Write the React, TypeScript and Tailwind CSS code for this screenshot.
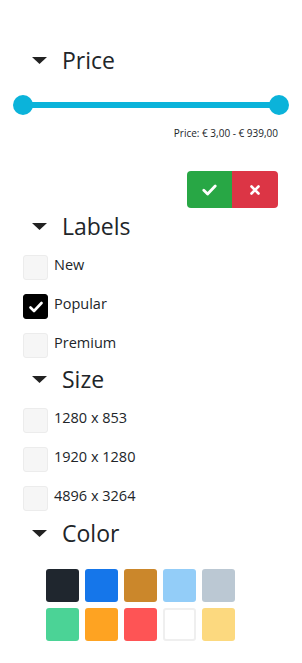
import { useState } from "react";

const Caret = () => (
  <svg width="15" height="7" viewBox="0 0 15 7" className="shrink-0">
    <path d="M0 0 H15 L7.5 7 Z" fill="#222" />
  </svg>
);

const Heading = ({ title, className = "" }: { title: string; className?: string }) => (
  <div className={`flex h-[32px] items-center pl-[32px] ${className}`}>
    <Caret />
    <span className="ml-[15px] text-[23px] leading-[32px] text-[#212529]">{title}</span>
  </div>
);

const Check = ({ label, checked, onToggle }: { label: string; checked: boolean; onToggle: () => void }) => (
  <label className="flex cursor-pointer items-start gap-[6px]" onClick={onToggle}>
    <span
      className={`flex h-[25px] w-[25px] items-center justify-center rounded-[3px] border ${
        checked ? "border-black bg-black" : "border-[#ececec] bg-[#f6f6f6]"
      }`}
    >
      {checked && (
        <svg width="14" height="12" viewBox="0 0 14 12">
          <path d="M1.5 6.5 L5 10 L12.5 2" fill="none" stroke="#fff" strokeWidth="2.6" strokeLinecap="round" strokeLinejoin="round" />
        </svg>
      )}
    </span>
    <span className="-mt-[1px] text-[14.5px] leading-[22px] text-[#212529]">{label}</span>
  </label>
);

const swatches = [
  "bg-[#1f262e]",
  "bg-[#1576ea]",
  "bg-[#cb872b]",
  "bg-[#93cdf8]",
  "bg-[#bbc8d3]",
  "bg-[#4bd396]",
  "bg-[#fea322]",
  "bg-[#fe5455]",
  "bg-white border-2 border-[#efefef]",
  "bg-[#fcd97f]",
];

export default function App() {
  const [labels, setLabels] = useState<Record<string, boolean>>({ New: false, Popular: true, Premium: false });
  const [sizes, setSizes] = useState<Record<string, boolean>>({});

  return (
    <div className="w-[302px] bg-white pt-[44px] pb-[22px] font-['Open_Sans',sans-serif]">
      <Heading title="Price" />

      {/* slider */}
      <div className="mt-[19px] px-[23px]">
        <div className="relative h-[20px]">
          <div className="absolute left-0 right-0 top-[7px] h-[6px] bg-[#0bb3da]" />
          <div className="absolute -left-[10px] top-0 h-[20px] w-[20px] rounded-full bg-[#0bb3da]" />
          <div className="absolute -right-[10px] top-0 h-[20px] w-[20px] rounded-full bg-[#0bb3da]" />
        </div>
      </div>
      <div className="mt-[12px] pr-[24px] text-right text-[10px] leading-[12px] text-[#212529]">
        Price: € 3,00 - € 939,00
      </div>

      <div className="mt-[32px] flex justify-end pr-[24px]">
        <button type="button" className="flex h-[37px] w-[45px] items-center justify-center rounded-l-[4px] bg-[#28a745]">
          <svg width="15" height="12" viewBox="0 0 15 12">
            <path d="M1.8 6.3 L5.6 10 L13.2 2" fill="none" stroke="#fff" strokeWidth="2.8" strokeLinecap="round" strokeLinejoin="round" />
          </svg>
        </button>
        <button type="button" className="flex h-[37px] w-[46px] items-center justify-center rounded-r-[4px] bg-[#dc3545]">
          <svg width="10" height="10" viewBox="0 0 10 10">
            <path d="M1.5 1.5 L8.5 8.5 M8.5 1.5 L1.5 8.5" stroke="#fff" strokeWidth="2.6" strokeLinecap="round" />
          </svg>
        </button>
      </div>

      <Heading title="Labels" className="mt-[2px]" />
      <div className="mt-[13px] flex flex-col gap-[14px] pl-[23px]">
        {["New", "Popular", "Premium"].map((l) => (
          <Check key={l} label={l} checked={!!labels[l]} onToggle={() => setLabels((s) => ({ ...s, [l]: !s[l] }))} />
        ))}
      </div>

      <Heading title="Size" className="mt-[5px]" />
      <div className="mt-[13px] flex flex-col gap-[14px] pl-[23px]">
        {["1280 x 853", "1920 x 1280", "4896 x 3264"].map((l) => (
          <Check key={l} label={l} checked={!!sizes[l]} onToggle={() => setSizes((s) => ({ ...s, [l]: !s[l] }))} />
        ))}
      </div>

      <Heading title="Color" className="mt-[6px]" />
      <div className="mt-[20px] grid w-fit grid-cols-5 gap-[6px] pl-[46px]">
        {swatches.map((c, i) => (
          <div key={i} className={`h-[33px] w-[33px] rounded-[3px] ${c}`} />
        ))}
      </div>
    </div>
  );
}
